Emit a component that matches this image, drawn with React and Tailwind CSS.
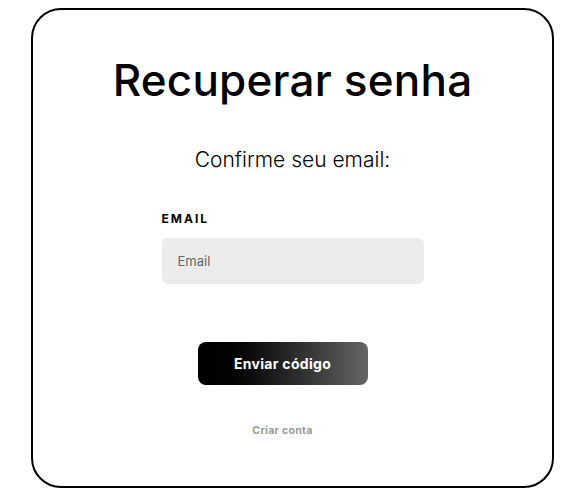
import React from 'react';

export default function App() {
  return (
    <div className="w-[575px] h-[490px] bg-white pt-[8px] pl-[31px]" style={{ fontFamily: 'Inter, "Noto Sans", sans-serif' }}>
      <div className="w-[523px] h-[480px] border-2 border-black rounded-[30px] flex flex-col items-center">
        <h1 className="mt-[42px] text-[44px] leading-[56px] font-medium text-black tracking-[0.2px]">Recuperar senha</h1>
        <p className="mt-[39px] text-[21px] leading-[26px] font-light text-black">Confirme seu email:</p>

        <div className="mt-[38px] w-[262px] flex flex-col">
          <label className="text-[12px] leading-[16px] font-bold tracking-[2px] text-black">EMAIL</label>
          <input
            placeholder="Email"
            className="mt-[11px] h-[46px] w-full rounded-[6px] bg-[#ececec] px-[16px] text-[13px] text-[#333] placeholder:text-[#666] outline-none"
          />
        </div>

        <button className="mt-[58px] mr-[20px] w-[170px] h-[43px] rounded-[8px] bg-gradient-to-r from-black to-[#666] text-white text-[14px] font-bold tracking-[0.3px]">
          Enviar código
        </button>

        <a className="mt-[38px] mr-[20px] text-[10.5px] font-bold text-[#999] tracking-[0.3px]">Criar conta</a>
      </div>
    </div>
  );
}
